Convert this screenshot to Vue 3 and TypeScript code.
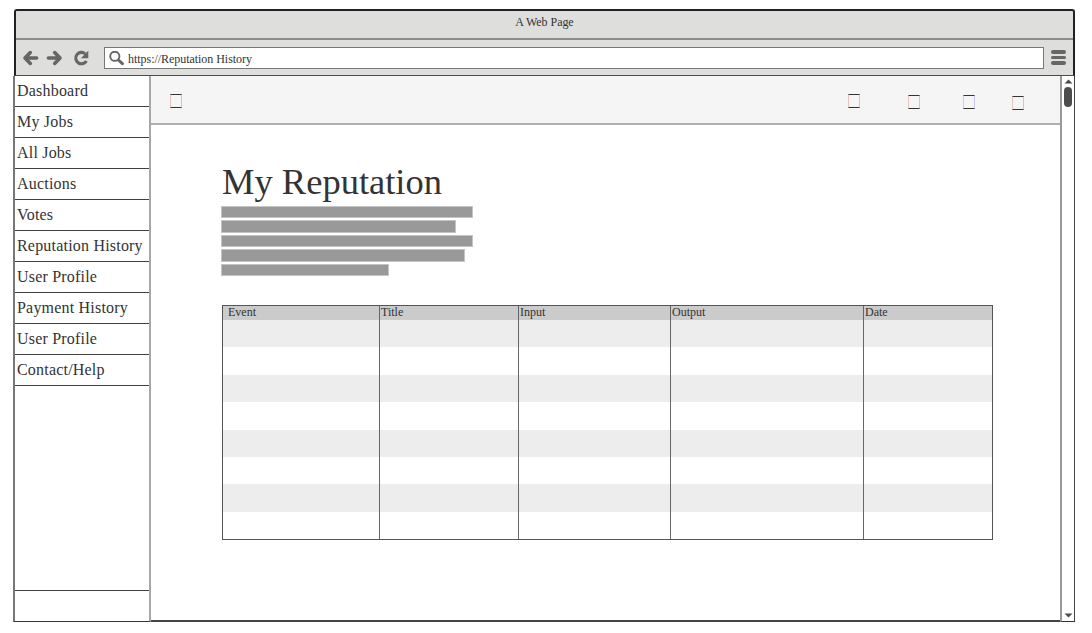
<script setup lang="ts">
interface Column {
  label: string
  width: number
}

const links: string[] = [
  'Dashboard',
  'My Jobs',
  'All Jobs',
  'Auctions',
  'Votes',
  'Reputation History',
  'User Profile',
  'Payment History',
  'User Profile',
  'Contact/Help',
]

const columns: Column[] = [
  { label: 'Event', width: 157 },
  { label: 'Title', width: 139 },
  { label: 'Input', width: 152 },
  { label: 'Output', width: 193 },
  { label: 'Date', width: 128 },
]

const textBars: number[] = [252, 235, 252, 244, 168]
const rowCount = 8
</script>

<template>
  <div class="window">
    <header class="chrome">
      <div class="titlebar"><span>A Web Page</span></div>
      <div class="toolbar">
        <svg class="nav-icons" width="88" height="35" viewBox="0 0 88 35" fill="none" stroke="#666" stroke-linecap="round" stroke-linejoin="round">
          <path d="M9.5 18H20.6M14.3 12.6L9 18L14.3 23.4" stroke-width="3.6" />
          <path d="M32.4 18H43.5M38.7 12.6L44 18L38.7 23.4" stroke-width="3.6" />
          <path d="M70.4 20.9A5.7 5.7 0 1 1 69.2 13.8" stroke-width="3.1" stroke-linecap="butt" />
          <path d="M72.3 10.8V18.3H64.8L67.6 15.5L69.5 13.6Z" fill="#666" stroke="none" />
        </svg>
        <div class="address">
          <svg width="16" height="16" viewBox="0 0 16 16" fill="none" stroke="#666">
            <circle cx="5.8" cy="5.3" r="4.6" stroke-width="1.9" />
            <path d="M9.4 9L13.4 12.7" stroke-width="3" stroke-linecap="round" />
          </svg>
          <span>https://Reputation History</span>
        </div>
        <div class="menu"><i></i><i></i><i></i></div>
      </div>
    </header>

    <div class="body">
      <nav class="sidebar">
        <a v-for="(link, i) in links" :key="i"><span>{{ link }}</span></a>
        <div class="filler"></div>
      </nav>

      <main class="page">
        <div class="topbar">
          <i class="glyph first"></i>
          <i class="glyph second"></i>
          <i class="glyph third"></i>
          <i class="glyph fourth"></i>
          <i class="glyph fifth"></i>
        </div>
        <section class="content">
          <h1><span>My Reputation</span></h1>
          <div class="bars">
            <div v-for="(w, i) in textBars" :key="i" class="bar" :style="{ width: w + 'px' }"></div>
          </div>
          <div class="table">
            <div v-for="c in columns" :key="c.label" class="column" :style="{ width: c.width + 'px' }">
              <div class="head"><span>{{ c.label }}</span></div>
              <div v-for="n in rowCount" :key="n" class="cell"></div>
            </div>
          </div>
        </section>
      </main>

      <aside class="scrollbar">
        <svg width="9" height="5" viewBox="0 0 9 5"><path d="M0.5 4.5L4.5 0.5L8.5 4.5Z" fill="#4d4d4d" /></svg>
        <div class="thumb"></div>
        <svg width="9" height="5" viewBox="0 0 9 5"><path d="M0.5 0.5L4.5 4.5L8.5 0.5Z" fill="#4d4d4d" /></svg>
      </aside>
    </div>
  </div>
</template>

<style>
body {
  background: #fff;
}
</style>

<style scoped>
* {
  box-sizing: border-box;
}

.window {
  width: 1062px;
  height: 613px;
  margin: 9px 0 0 13px;
  font-family: "Liberation Serif", "Times New Roman", serif;
  color: #333;
  display: flex;
  flex-direction: column;
}

.chrome {
  height: 67px;
  margin-left: 1px;
  background: #dededc;
  border: 2px solid #222;
  border-width: 2px 2px 1px;
  border-bottom-color: #4d4d4d;
  border-radius: 3px 3px 0 0;
}

.titlebar {
  height: 29px;
  border-bottom: 2px solid #8c8c8b;
  text-align: center;
  font-size: 12px;
  line-height: 22px;
  letter-spacing: -0.05px;
}

.titlebar span {
  display: inline-block;
}

.toolbar {
  height: 35px;
  display: flex;
}

.nav-icons {
  width: 88px;
  flex: none;
}

.address {
  width: 940px;
  height: 22px;
  margin-top: 7px;
  background: #fff;
  border: 1px solid #777;
  display: flex;
  align-items: flex-start;
  font-size: 12px;
  line-height: 22px;
  letter-spacing: -0.04px;
  white-space: nowrap;
}

.address svg {
  margin: 3px 3px 0 4px;
}

.menu {
  margin: 10px 0 0 7px;
  width: 15px;
  display: flex;
  flex-direction: column;
  gap: 2px;
}

.menu i {
  height: 3.6px;
  border-radius: 2px;
  background: #666;
}

.body {
  height: 546px;
  display: flex;
}

.sidebar {
  width: 138px;
  border-left: 2px solid #777;
  border-right: 2px solid #a8a8a8;
  border-bottom: 1px solid #333;
}

.sidebar a {
  display: block;
  height: 31px;
  border-bottom: 1px solid #404040;
  font-size: 16px;
  line-height: 29px;
  padding-left: 2px;
  white-space: nowrap;
  letter-spacing: 0.2px;
}

.filler {
  height: 205px;
  border-bottom: 1px solid #404040;
}

.page {
  width: 909px;
  border-bottom: 2px solid #444;
}

.topbar {
  height: 49px;
  background: #f5f5f5;
  border-bottom: 2px solid #b0b0b0;
  display: flex;
}

.glyph {
  width: 12px;
  height: 14px;
  border: 1px solid #333;
  border-left-color: #e6c6c2;
  border-right-color: #c6c6e6;
  flex: none;
}

.first {
  margin: 18px 0 0 19px;
}

.second {
  margin: 18px 0 0 666px;
}

.third {
  margin: 19px 0 0 48px;
}

.fourth {
  margin: 19px 0 0 43px;
}

.fifth {
  margin: 20px 0 0 37px;
}

.content {
  padding: 34px 0 0 70px;
}

h1 {
  margin: 0;
  padding-left: 1px;
  height: 47px;
  font-size: 36.5px;
  line-height: 46px;
  font-weight: 400;
}

.bars {
  height: 99px;
  display: flex;
  flex-direction: column;
  gap: 2px;
}

.bar {
  height: 12.4px;
  background: #999;
  border: 1px solid #c4c4c4;
}

.table {
  width: 771px;
  height: 235px;
  display: flex;
  border: 1px solid #555;
  margin-left: 1px;
}

.column {
  border-right: 1px solid #666;
  flex: none;
}

.column:last-child {
  border-right: 0;
}

.head {
  height: 14px;
  background: #cbcbcb;
  font-size: 12px;
  line-height: 13px;
  padding-left: 1px;
}

.column:first-child .head {
  padding-left: 5px;
}

.cell {
  height: 27.4px;
}

.cell:nth-child(even) {
  background: #ededed;
}

.scrollbar {
  width: 15px;
  border-left: 2px solid #999;
  border-right: 1px solid #444;
  border-bottom: 1px solid #333;
  padding: 3px 0;
  display: flex;
  flex-direction: column;
  align-items: center;
}

.thumb {
  width: 8px;
  height: 20px;
  border-radius: 4px;
  background: #4d4d4d;
  margin: 3px 0 auto;
}
</style>
